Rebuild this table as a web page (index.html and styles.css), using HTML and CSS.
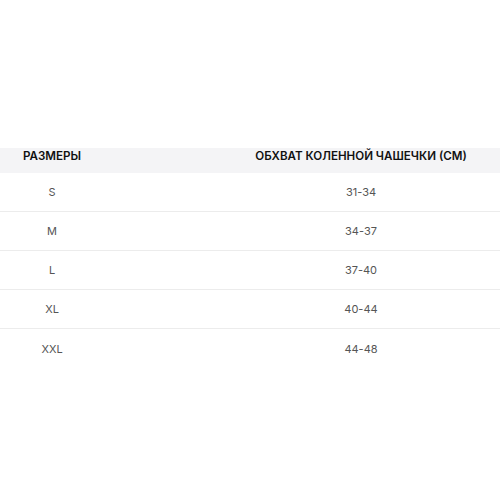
FILE: index.html
```html
<!DOCTYPE html>
<html lang="ru">
<head>
<meta charset="utf-8">
<link rel="stylesheet" href="styles.css">
</head>
<body>
<div class="page">
  <div class="table">
    <div class="row head">
      <div class="c1">РАЗМЕРЫ</div>
      <div class="c2">ОБХВАТ КОЛЕННОЙ ЧАШЕЧКИ (СМ)</div>
    </div>
    <div class="row"><div class="c1">S</div><div class="c2">31-34</div></div>
    <div class="row"><div class="c1">M</div><div class="c2">34-37</div></div>
    <div class="row"><div class="c1">L</div><div class="c2">37-40</div></div>
    <div class="row"><div class="c1">XL</div><div class="c2">40-44</div></div>
    <div class="row last"><div class="c1">XXL</div><div class="c2">44-48</div></div>
  </div>
</div>
</body>
</html>
```
FILE: styles.css
```css
html, body {
  margin: 0;
  padding: 0;
  background: #fff;
}
.page {
  width: 500px;
  height: 500px;
  padding-top: 148px;
  box-sizing: border-box;
  font-family: Inter, "Noto Sans", sans-serif;
}
.table {
  display: flex;
  flex-direction: column;
}
.row {
  display: grid;
  grid-template-columns: 104px 1fr;
  height: 39px;
  align-items: center;
  border-bottom: 1px solid #ececec;
  box-sizing: border-box;
  font-size: 11px;
  color: #555;
}
.row.last {
  border-bottom: none;
}
.row.head {
  height: 25px;
  background: #f4f4f6;
  border-bottom: none;
  align-items: start;
  padding-top: 1px;
  line-height: 14px;
  font-weight: 600;
  color: #111;
  font-size: 11.6px;
}
.c1 {
  text-align: center;
}
.c2 {
  text-align: center;
  padding-left: 118px;
}
```
